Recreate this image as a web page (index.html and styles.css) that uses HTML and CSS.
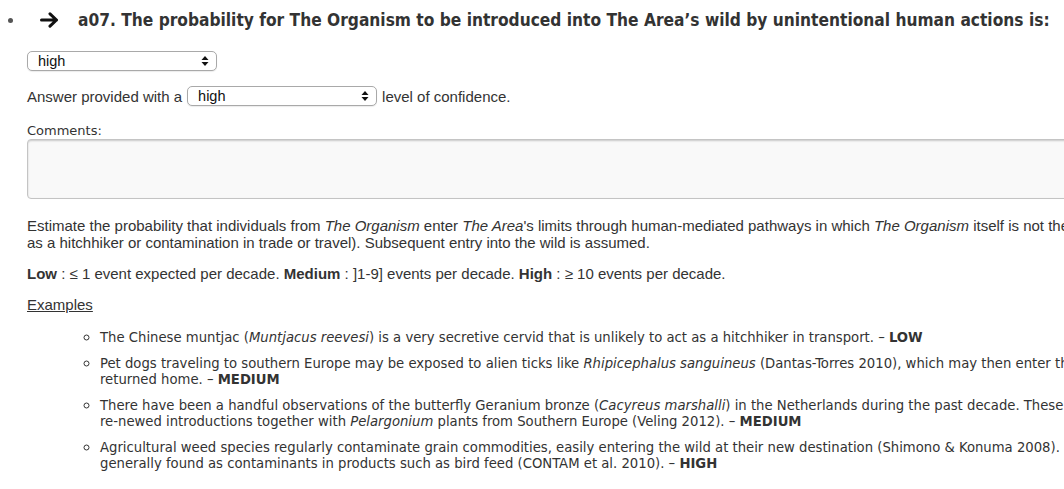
FILE: index.html
```html
<!DOCTYPE html>
<html>
<head>
<meta charset="utf-8">
<link rel="stylesheet" href="styles.css">
</head>
<body>
<div class="page">
  <ul class="qlist">
    <li class="qitem">
      <h3 class="qtitle">
        <svg class="arrow" width="19" height="16" viewBox="0 0 19 16"><path d="M1.5 8 H16.5 M10 1.8 L16.5 8 L10 14.2" fill="none" stroke="#111" stroke-width="3" stroke-linecap="round" stroke-linejoin="round"/></svg>
        <span class="qtext">a07. The probability for The Organism to be introduced into The Area’s wild by unintentional human actions is:</span>
      </h3>
    </li>
  </ul>

  <div class="qbody">
    <div class="row sel-row1">
      <span class="sel sel-wide">
        <select><option>high</option></select>
        <svg class="updown" width="8" height="12" viewBox="0 0 8 12"><path d="M4 1 L7.5 5 H0.5 Z M4 11 L7.5 7 H0.5 Z" fill="#111"/></svg>
      </span>
    </div>

    <div class="row sel-row2">
      <span class="lbl">Answer provided with a</span>
      <span class="sel sel-wide">
        <select><option>high</option></select>
        <svg class="updown" width="8" height="12" viewBox="0 0 8 12"><path d="M4 1 L7.5 5 H0.5 Z M4 11 L7.5 7 H0.5 Z" fill="#111"/></svg>
      </span>
      <span class="lbl">level of confidence.</span>
    </div>

    <div class="comments">
      <label class="clabel">Comments:</label>
      <textarea class="cbox"></textarea>
    </div>

    <div class="help">
      <p class="para">Estimate the probability that individuals from <i>The Organism</i> enter <i>The Area</i>'s limits through human-mediated pathways in which <i>The Organism</i> itself is not the commodity (e.g.<br>as a hitchhiker or contamination in trade or travel). Subsequent entry into the wild is assumed.</p>
      <p class="para"><b>Low</b> : ≤ 1 event expected per decade. <b>Medium</b> : ]1-9] events per decade. <b>High</b> : ≥ 10 events per decade.</p>
      <p class="para para-ex"><u>Examples</u></p>
      <ul class="examples">
        <li>The Chinese muntjac (<i>Muntjacus reevesi</i>) is a very secretive cervid that is unlikely to act as a hitchhiker in transport. – <b>LOW</b></li>
        <li>Pet dogs traveling to southern Europe may be exposed to alien ticks like <i>Rhipicephalus sanguineus</i> (Dantas-Torres 2010), which may then enter the Netherlands when the dogs have<br>returned home. – <b>MEDIUM</b></li>
        <li>There have been a handful observations of the butterfly Geranium bronze (<i>Cacyreus marshalli</i>) in the Netherlands during the past decade. These are most likely the result of<br>re-newed introductions together with <i>Pelargonium</i> plants from Southern Europe (Veling 2012). – <b>MEDIUM</b></li>
        <li>Agricultural weed species regularly contaminate grain commodities, easily entering the wild at their new destination (Shimono &amp; Konuma 2008). Bird seeds are also<br>generally found as contaminants in products such as bird feed (CONTAM et al. 2010). – <b>HIGH</b></li>
      </ul>
    </div>
  </div>
</div>
</body>
</html>
```

FILE: styles.css
```css
html, body {
  margin: 0;
  padding: 0;
  overflow: hidden;
  background: #fff;
}
.page {
  width: 1400px;
  color: #333;
  font-family: "Liberation Sans", Arial, sans-serif;
  font-size: 15px;
}
.qlist {
  margin: 0;
  padding: 10px 0 0 0;
  list-style: none;
}
.qtitle {
  margin: 0;
  padding-left: 8px;
  display: flex;
  align-items: center;
  height: 20px;
  font-family: "DejaVu Sans Condensed", Tahoma, sans-serif;
  font-weight: bold;
  font-size: 17.2px;
  color: #333;
}
.qtitle::before {
  content: "";
  flex: none;
  width: 5px;
  height: 5px;
  border-radius: 50%;
  background: #555;
  margin-right: 27px;
  margin-top: 1px;
}
.arrow {
  flex: none;
  margin-right: 19px;
}
.qtext {
  white-space: nowrap;
}
.qbody {
  padding-left: 27px;
}
.row {
  display: flex;
  align-items: center;
  gap: 5px;
}
.sel-row1 {
  margin-top: 21px;
}
.sel-row2 {
  margin-top: 15px;
}
.sel {
  position: relative;
  display: inline-flex;
}
.sel select {
  appearance: none;
  -webkit-appearance: none;
  width: 190px;
  height: 20px;
  border: 1px solid #a9a9a9;
  border-radius: 5px;
  background: #fff;
  padding: 0 0 0 10px;
  margin: 0;
  font-family: "Liberation Sans", Arial, sans-serif;
  font-size: 14.5px;
  color: #111;
  box-shadow: 0 1px 1px rgba(0,0,0,0.08);
}
.updown {
  position: absolute;
  right: 8px;
  top: 4px;
  pointer-events: none;
}
.lbl {
  font-size: 15px;
}
.comments {
  margin-top: 16px;
  display: flex;
  flex-direction: column;
}
.clabel {
  font-family: "DejaVu Sans", Verdana, sans-serif;
  font-size: 13px;
  color: #333;
  line-height: 17px;
}
.cbox {
  display: block;
  margin: 0;
  width: 1300px;
  height: 60px;
  box-sizing: border-box;
  border: 1px solid #c4c4c4;
  border-radius: 4px;
  background: #f9f9f9;
  box-shadow: inset 0 1px 2px rgba(0,0,0,0.2);
  resize: none;
}
.help {
  margin-top: 18px;
}
.para {
  margin: 0 0 14px 0;
  line-height: 17px;
  white-space: nowrap;
}
.para-ex {
  margin-bottom: 16px;
}
.examples {
  margin: 0;
  padding-left: 73px;
  list-style: circle;
  font-family: "DejaVu Sans Condensed", Tahoma, sans-serif;
  font-size: 14.7px;
  line-height: 16.5px;
}
.examples li {
  white-space: nowrap;
  margin-bottom: 9px;
}
```
